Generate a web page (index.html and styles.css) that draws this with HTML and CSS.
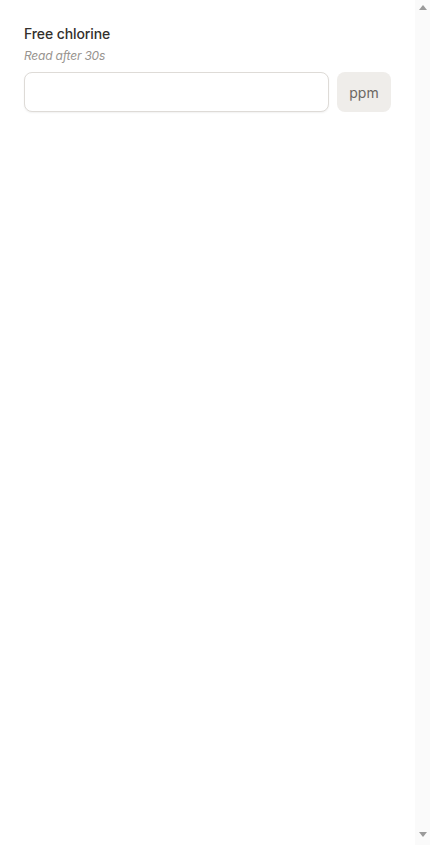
FILE: index.html
```html
<!DOCTYPE html>
<html lang="en">

<head>
    <meta charset="UTF-8">
    <meta name="viewport" content="width=device-width, initial-scale=1.0">
    <title>Free chlorine</title>
    <link rel="stylesheet" href="styles.css">
</head>

<body>
    <div class="page">
        <main class="content">
            <div class="field">
                <label class="field-label" for="chlorine">Free chlorine</label>
                <div class="field-hint">Read after 30s</div>
                <div class="field-row">
                    <input class="field-input" id="chlorine" type="text">
                    <span class="field-unit">ppm</span>
                </div>
            </div>
        </main>
        <div class="scrollbar">
            <span class="arrow arrow-up"></span>
            <span class="arrow arrow-down"></span>
        </div>
    </div>
</body>

</html>
```

FILE: styles.css
```css
body {
    margin: 0;
    background-color: #ffffff;
    font-family: 'Inter', 'Noto Sans', sans-serif;
    color: #2f2d2b;
}

.page {
    display: flex;
    height: 100vh;
}

.content {
    flex: 1;
    padding: 24px;
}

/* Scroll track on the right */
.scrollbar {
    display: flex;
    flex-direction: column;
    justify-content: space-between;
    align-items: center;
    width: 15px;
    padding: 5px 0 8px;
    box-sizing: border-box;
    background-color: #fafafa;
}

.arrow {
    width: 0;
    height: 0;
    border-left: 4px solid transparent;
    border-right: 4px solid transparent;
}

.arrow-up {
    border-bottom: 5px solid #9a9a9a;
}

.arrow-down {
    border-top: 5px solid #9a9a9a;
}

.field {
    display: flex;
    flex-direction: column;
}

.field-label {
    font-size: 14px;
    font-weight: 500;
    line-height: 20px;
    letter-spacing: -0.1px;
    color: #33302d;
}

.field-hint {
    margin-top: 4px;
    font-size: 12px;
    font-style: italic;
    line-height: 16px;
    letter-spacing: -0.2px;
    color: #98948f;
}

.field-row {
    display: flex;
    gap: 8px;
    margin-top: 8px;
}

.field-input {
    flex: 1;
    height: 40px;
    box-sizing: border-box;
    padding: 0 12px;
    border: 1px solid #dedbd7;
    border-radius: 8px;
    box-shadow: 0 1px 2px rgba(0, 0, 0, 0.06);
    font-family: inherit;
    font-size: 14px;
    outline: none;
}

.field-unit {
    display: flex;
    align-items: center;
    justify-content: center;
    width: 54px;
    height: 40px;
    border-radius: 8px;
    background-color: #efedea;
    font-size: 14px;
    color: #6b6762;
}
```
